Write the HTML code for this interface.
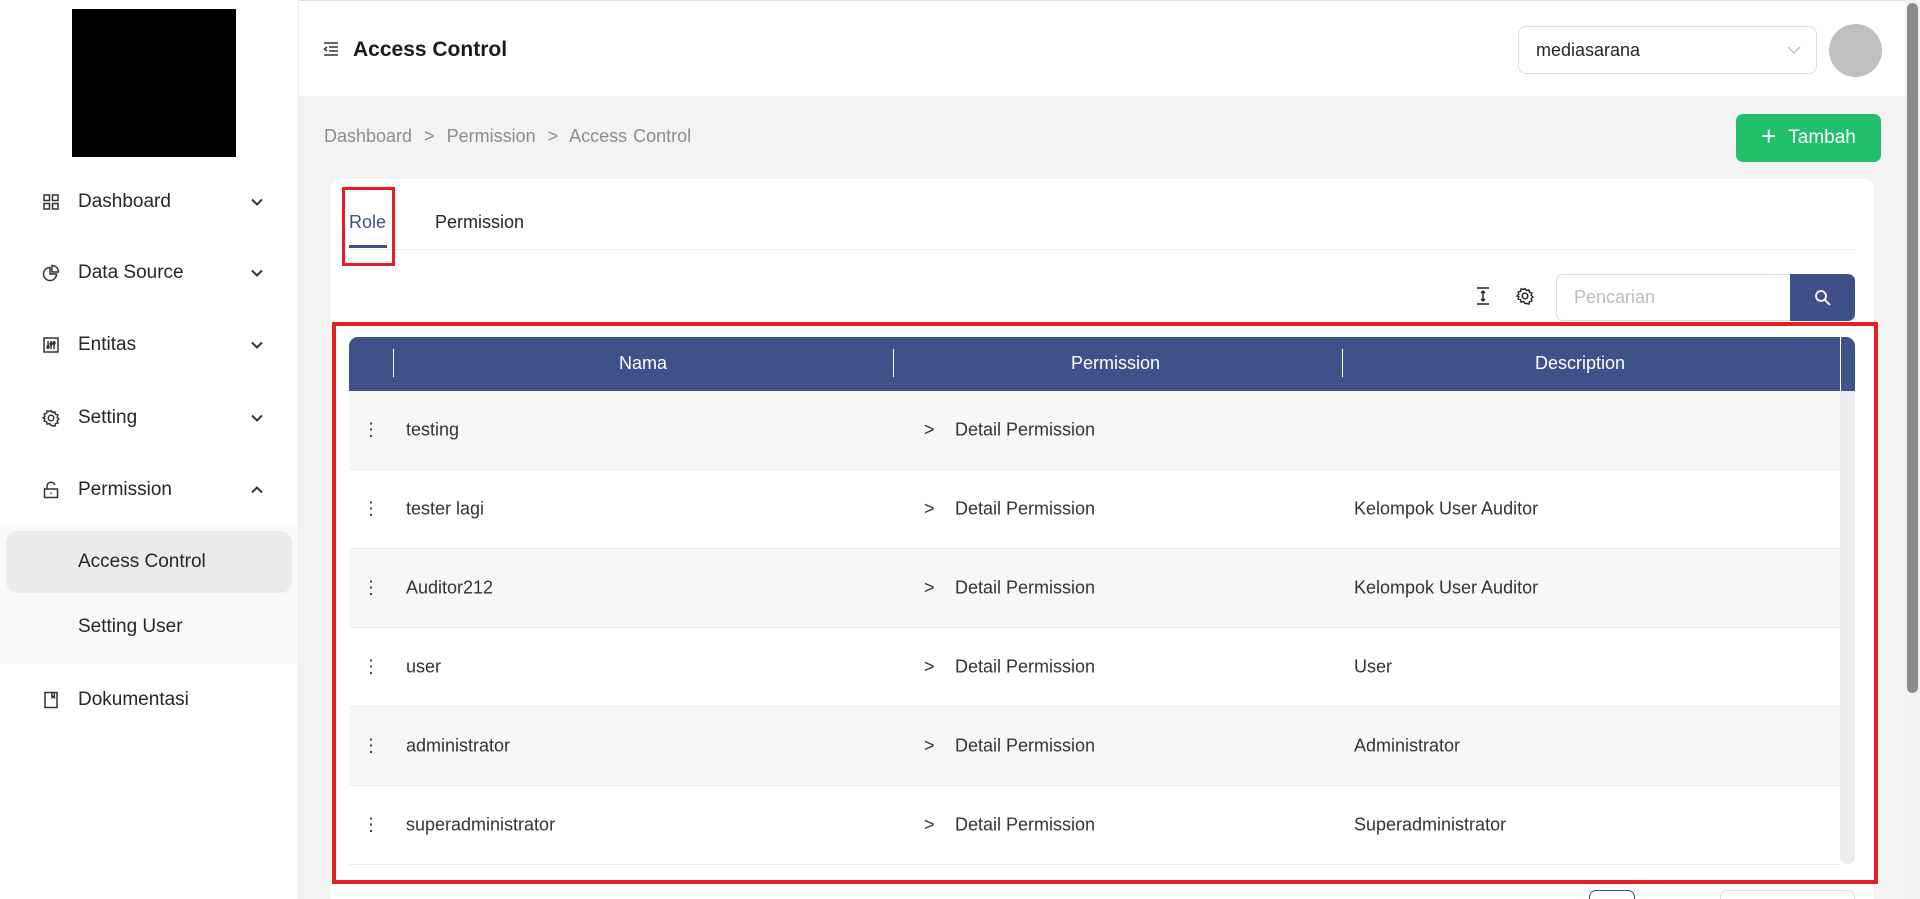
<!DOCTYPE html>
<html style="overflow:hidden;height:899px"><head><meta charset="utf-8"><style>
*{box-sizing:border-box;margin:0;padding:0}
body{width:1920px;height:899px;overflow:hidden;font-family:"Liberation Sans",sans-serif;background:#f3f3f3;position:relative;color:#262626}
.abs{position:absolute}
.side{left:0;top:0;width:299px;height:899px;background:#fff;border-right:1px solid #ececec}
.mi{position:absolute;left:0;width:299px;height:40px;display:flex;align-items:center;font-size:19px;color:#262626}
.mi .ic{position:absolute;left:42px;width:18px;height:18px}
.mi .tx{position:absolute;left:78px}
.mi .ch{position:absolute;left:250px;width:14px;height:14px}
.hdr{left:299px;top:0;width:1606px;height:96px;background:#fff;border-top:1px solid #ddd}
.row{position:absolute;left:349px;width:1491px;height:79px;border-bottom:1px solid #ececec;font-size:18px;color:#333}
.row span{position:absolute;top:50%;transform:translateY(-50%)}
.g{background:#f7f7f7}.w{background:#fff}
</style></head><body>
<div class="abs side">
  <div class="abs" style="left:72px;top:9px;width:164px;height:148px;background:#000"></div>
  <div class="mi" style="top:182px"><svg class="ic" viewBox="0 0 18 18" fill="none" stroke="#333" stroke-width="1.5"><rect x="2" y="2" width="5.5" height="5.5"/><rect x="10.5" y="2" width="5.5" height="5.5"/><rect x="2" y="10.5" width="5.5" height="5.5"/><rect x="10.5" y="10.5" width="5.5" height="5.5"/></svg><span class="tx">Dashboard</span><svg class="ch" viewBox="0 0 14 14" fill="none" stroke="#333" stroke-width="2"><path d="M2 4.5l5 5 5-5"/></svg></div>
  <div class="mi" style="top:253px"><svg class="ic" viewBox="0 0 18 18" fill="none" stroke="#333" stroke-width="1.5"><path d="M8 3.5a6.5 6.5 0 1 0 6.5 6.5H8z"/><path d="M10 1.5v6.5h6.5A6.5 6.5 0 0 0 10 1.5z"/></svg><span class="tx">Data Source</span><svg class="ch" viewBox="0 0 14 14" fill="none" stroke="#333" stroke-width="2"><path d="M2 4.5l5 5 5-5"/></svg></div>
  <div class="mi" style="top:325px"><svg class="ic" viewBox="0 0 18 18" fill="none" stroke="#333" stroke-width="1.5"><rect x="2" y="2" width="14" height="14"/><path d="M6 5v8M9 5v8M12 5v8"/><circle cx="6" cy="11" r="1"/><circle cx="9" cy="8" r="1"/><circle cx="12" cy="7" r="1"/></svg><span class="tx">Entitas</span><svg class="ch" viewBox="0 0 14 14" fill="none" stroke="#333" stroke-width="2"><path d="M2 4.5l5 5 5-5"/></svg></div>
  <div class="mi" style="top:398px"><svg class="ic" viewBox="0 0 18 18" fill="none" stroke="#333" stroke-width="1.5"><circle cx="9" cy="9" r="2.8"/><path d="M9 1.5l1.5 2 2.4-.6.6 2.4 2.4.7-.7 2.4 1.7 1.6-1.7 1.6.7 2.4-2.4.7-.6 2.4-2.4-.6L9 16.5l-1.5-2-2.4.6-.6-2.4-2.4-.7.7-2.4L1.1 9l1.7-1.6-.7-2.4 2.4-.7.6-2.4 2.4.6z"/></svg><span class="tx">Setting</span><svg class="ch" viewBox="0 0 14 14" fill="none" stroke="#333" stroke-width="2"><path d="M2 4.5l5 5 5-5"/></svg></div>
  <div class="mi" style="top:470px"><svg class="ic" viewBox="0 0 18 18" fill="none" stroke="#333" stroke-width="1.5"><rect x="2.5" y="8" width="13" height="8.5"/><path d="M5 8V5a4 4 0 0 1 7.8-1"/><path d="M9 11.5v1.5"/></svg><span class="tx">Permission</span><svg class="ch" viewBox="0 0 14 14" fill="none" stroke="#333" stroke-width="2"><path d="M2 9.5l5-5 5 5"/></svg></div>
  <div class="abs" style="left:0;top:527px;width:298px;height:137px;background:#f9f9f9"></div>
  <div class="abs" style="left:6px;top:531px;width:286px;height:62px;background:#ebebeb;border-radius:12px"></div>
  <div class="mi" style="top:542px"><span class="tx">Access Control</span></div>
  <div class="mi" style="top:607px"><span class="tx">Setting User</span></div>
  <div class="mi" style="top:680px"><svg class="ic" viewBox="0 0 18 18" fill="none" stroke="#333" stroke-width="1.5"><rect x="3" y="1.5" width="12" height="15"/><path d="M10 1.5v5l1.2-1 1.2 1v-5"/></svg><span class="tx">Dokumentasi</span></div>
</div>
<div class="abs hdr">
  <svg class="abs" style="left:24px;top:41px" width="16" height="14" viewBox="0 0 16 14" fill="none" stroke="#333" stroke-width="1.5"><path d="M1 1h14M6 5h9M6 9h9M1 13h14M4 5L1.5 7 4 9"/></svg>
  <div class="abs" style="left:54px;top:37px;font-size:21px;font-weight:bold;color:#1a1a1a">Access Control</div>
  <div class="abs" style="left:1219px;top:25px;width:299px;height:48px;border:1px solid #ddd;border-radius:8px;background:#fff">
    <span class="abs" style="left:17px;top:13px;font-size:18px;color:#262626">mediasarana</span>
    <svg class="abs" style="left:268px;top:18px" width="14" height="10" viewBox="0 0 14 10" fill="none" stroke="#bbb" stroke-width="1.3"><path d="M1 2l6 6 6-6"/></svg>
  </div>
  <div class="abs" style="left:1530px;top:23px;width:53px;height:53px;border-radius:50%;background:#bfbfbf"></div>
</div>
<div class="abs" style="left:1905px;top:0;width:15px;height:899px;background:#f1f1f1"><div style="margin:3px 2px;width:11px;height:690px;background:#8a8a8a;border-radius:6px"></div></div>
<div class="abs" style="left:324px;top:126px;font-size:18px;color:#8c8c8c;word-spacing:1px">Dashboard &nbsp;&gt;&nbsp; Permission &nbsp;&gt;&nbsp; Access Control</div>
<div class="abs" style="left:1736px;top:114px;width:145px;height:48px;background:#22c06b;border-radius:7px;color:#fff;font-size:19px;display:flex;align-items:center;justify-content:center"><span style="font-size:26px;font-weight:300;margin-right:12px;margin-top:-3px">+</span>Tambah</div>
<div class="abs" style="left:331px;top:179px;width:1543px;height:720px;background:#fff;border-radius:9px 9px 0 0"></div>
<div class="abs" style="left:349px;top:212px;font-size:18px;color:#3f5089">Role</div>
<div class="abs" style="left:349px;top:245px;width:38px;height:3px;background:#3f5089"></div>
<div class="abs" style="left:435px;top:212px;font-size:18px;color:#262626">Permission</div>
<div class="abs" style="left:349px;top:249px;width:1506px;height:1px;background:#ececec"></div>
<div class="abs" style="left:342px;top:187px;width:53px;height:79px;border:3px solid #e31e24"></div>
<svg class="abs" style="left:1475px;top:287px" width="16" height="18" viewBox="0 0 16 18" fill="none" stroke="#222" stroke-width="1.5"><path d="M2 1h12M2 17h12M8 4v10M6 6l2-2 2 2M6 12l2 2 2-2"/></svg>
<svg class="abs" style="left:1516px;top:287px" width="18" height="18" viewBox="0 0 18 18" fill="none" stroke="#222" stroke-width="1.4"><circle cx="9" cy="9" r="2.8"/><path d="M9 1.5l1.5 2 2.4-.6.6 2.4 2.4.7-.7 2.4 1.7 1.6-1.7 1.6.7 2.4-2.4.7-.6 2.4-2.4-.6L9 16.5l-1.5-2-2.4.6-.6-2.4-2.4-.7.7-2.4L1.1 9l1.7-1.6-.7-2.4 2.4-.7.6-2.4 2.4.6z"/></svg>
<div class="abs" style="left:1556px;top:274px;width:240px;height:47px;border:1px solid #ddd;border-radius:7px 0 0 7px;background:#fff"><span class="abs" style="left:17px;top:12px;font-size:18px;color:#bdbdbd">Pencarian</span></div>
<div class="abs" style="left:1790px;top:274px;width:65px;height:47px;background:#3f5089;border-radius:0 7px 7px 0"><svg class="abs" style="left:24px;top:15px" width="18" height="18" viewBox="0 0 18 18" fill="none" stroke="#fff" stroke-width="1.8"><circle cx="7" cy="7" r="5"/><path d="M11 11l5 5"/></svg></div>
<div class="abs" style="left:349px;top:337px;width:1506px;height:54px;background:#3f5189;border-radius:9px 9px 0 0;color:#fff;font-size:18px">
  <div class="abs" style="left:44px;top:12px;width:1px;height:28px;background:#fff"></div>
  <div class="abs" style="left:544px;top:12px;width:1px;height:28px;background:#fff"></div>
  <div class="abs" style="left:993px;top:12px;width:1px;height:28px;background:#fff"></div>
  <div class="abs" style="left:1491px;top:0;width:1px;height:54px;background:#fff"></div>
  <span class="abs" style="left:270px;top:16px">Nama</span>
  <span class="abs" style="left:722px;top:16px">Permission</span>
  <span class="abs" style="left:1186px;top:16px">Description</span>
</div>
<div class="abs" style="left:1840px;top:391px;width:15px;height:473px;background:#ececec;border-radius:0 0 7px 7px"></div>
<div class="row g" style="top:391px"><span style="left:13px">⋮</span><span style="left:57px">testing</span><span style="left:575px">&gt;</span><span style="left:606px">Detail Permission</span></div>
<div class="row w" style="top:470px"><span style="left:13px">⋮</span><span style="left:57px">tester lagi</span><span style="left:575px">&gt;</span><span style="left:606px">Detail Permission</span><span style="left:1005px">Kelompok User Auditor</span></div>
<div class="row g" style="top:549px"><span style="left:13px">⋮</span><span style="left:57px">Auditor212</span><span style="left:575px">&gt;</span><span style="left:606px">Detail Permission</span><span style="left:1005px">Kelompok User Auditor</span></div>
<div class="row w" style="top:628px"><span style="left:13px">⋮</span><span style="left:57px">user</span><span style="left:575px">&gt;</span><span style="left:606px">Detail Permission</span><span style="left:1005px">User</span></div>
<div class="row g" style="top:707px"><span style="left:13px">⋮</span><span style="left:57px">administrator</span><span style="left:575px">&gt;</span><span style="left:606px">Detail Permission</span><span style="left:1005px">Administrator</span></div>
<div class="row w" style="top:786px"><span style="left:13px">⋮</span><span style="left:57px">superadministrator</span><span style="left:575px">&gt;</span><span style="left:606px">Detail Permission</span><span style="left:1005px">Superadministrator</span></div>
<div class="abs" style="left:332px;top:322px;width:1546px;height:562px;border:4px solid #e31e24"></div>
<div class="abs" style="left:1589px;top:890px;width:46px;height:9px;border:1px solid #3f5089;border-bottom:none;border-radius:7px 7px 0 0"></div>
<div class="abs" style="left:1720px;top:890px;width:135px;height:9px;border:1px solid #ddd;border-bottom:none;border-radius:7px 7px 0 0"></div>
</body></html>
